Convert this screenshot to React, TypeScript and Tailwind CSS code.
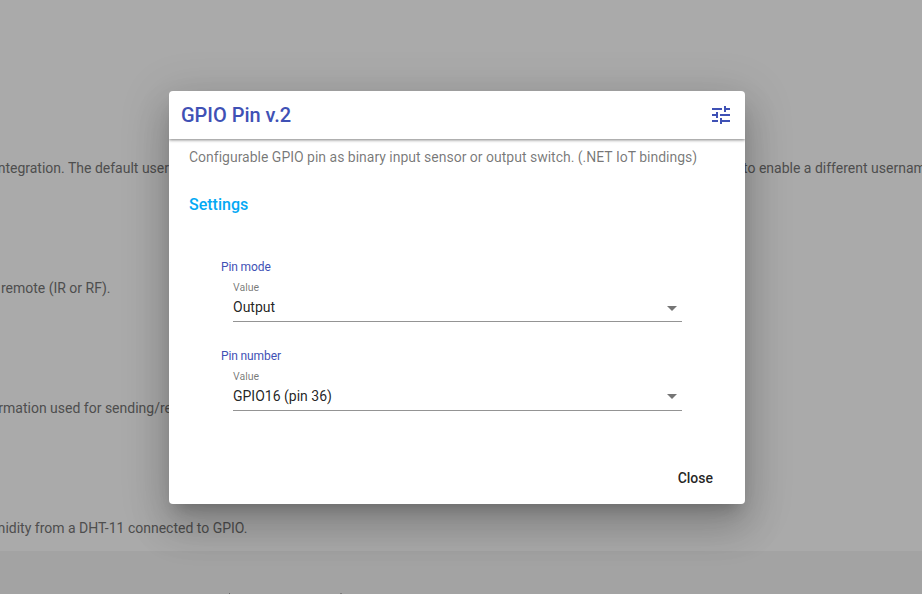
import React from 'react';

const rows = [
  { text: 'integration. The default user', width: 'w-[169px]', tail: 'to enable a different username' },
  { text: 'remote (IR or RF).', width: 'w-[110.5px]' },
  { text: 'information used for sending/re', width: 'w-[172px]' },
  { text: 'humidity from a DHT-11 connected to GPIO.', width: 'w-[247.5px]' },
];

function Field({ label, value, className, arrow }: { label: string; value: string; className: string; arrow: string }) {
  return (
    <div className={className}>
      <div className="h-4 text-xs leading-4 tracking-[-0.01em] text-[#3f51b5]">{label}</div>
      <div className="ml-3 mt-1 h-[43px] w-[449px] border-b border-[#949494]">
        <div className="pt-[3px] text-[10.5px] leading-3 text-black/54">Value</div>
        <div className="mt-[5px] flex h-4 items-center justify-between pr-[5px] text-sm leading-4 text-black/87">
          <span>{value}</span>
          <span className={`border-x-5 border-t-5 border-x-transparent border-t-black/54 ${arrow}`} />
        </div>
      </div>
    </div>
  );
}

export default function App() {
  return (
    <div className="relative h-[594px] w-[922px] overflow-hidden bg-[#aaaaaa] font-['Roboto',sans-serif]">
      <div className="flex h-full flex-col pt-[71px]">
        {rows.map((row) => (
          <div key={row.text} className="flex h-[120px] shrink-0 items-start justify-between pt-[87px] text-sm leading-5 text-[#4e4e4e]">
            <div className={`flex justify-end overflow-hidden whitespace-nowrap ${row.width}`}>
              <span>{row.text}</span>
            </div>
            {row.tail && <div className="w-[179px] overflow-hidden whitespace-nowrap">{row.tail}</div>}
          </div>
        ))}
        <div className="flex h-[43px] shrink-0 items-end gap-[110px] bg-[#a3a3a3] pl-[229px]">
          <span className="h-px w-px bg-[#666666]" />
          <span className="h-px w-[2px] bg-[#7c7c7c]" />
        </div>
      </div>

      <div
        role="dialog"
        className="absolute left-[169px] top-[91px] flex h-[413px] w-[576px] flex-col rounded bg-white shadow-[0_11px_15px_-7px_rgba(0,0,0,0.2),0_24px_38px_3px_rgba(0,0,0,0.14),0_9px_46px_8px_rgba(0,0,0,0.12)]"
      >
        <div className="flex grow flex-col overflow-hidden rounded">
          <header className="flex h-12 shrink-0 items-center justify-between px-3 text-[#3f51b5] shadow-[0_1px_3px_rgba(0,0,0,0.5)]">
            <h1 className="text-xl font-medium leading-6 tracking-[-0.03px]">GPIO Pin v.2</h1>
            <svg className="size-6" viewBox="0 0 24 24" fill="currentColor">
              <path d="M3 17v2h6v-2H3zM3 5v2h10V5H3zm10 16v-2h8v-2h-8v-2h-2v6h2zM7 9v2H3v2h4v2h2V9H7zm14 4v-2H11v2h10zm-6-4h2V7h4V5h-4V3h-2v6z" />
            </svg>
          </header>
          <main className="flex grow flex-col px-5 pt-2">
            <p className="whitespace-nowrap text-sm leading-5 tracking-[-0.006px] text-black/54">
              Configurable GPIO pin as binary input sensor or output switch. (.NET IoT bindings)
            </p>
            <h2 className="mt-[26px] text-base font-medium leading-6 text-[#03a9f4]">Settings</h2>
            <Field label="Pin mode" value="Output" className="ml-8 mt-[42px]" arrow="mt-0.5" />
            <Field label="Pin number" value="GPIO16 (pin 36)" className="ml-8 mt-[26px]" arrow="mt-0" />
          </main>
          <footer className="flex h-[52px] shrink-0 items-start justify-end pr-8 pt-4">
            <button className="text-sm font-medium leading-5 text-black/87">Close</button>
          </footer>
        </div>
      </div>
    </div>
  );
}
